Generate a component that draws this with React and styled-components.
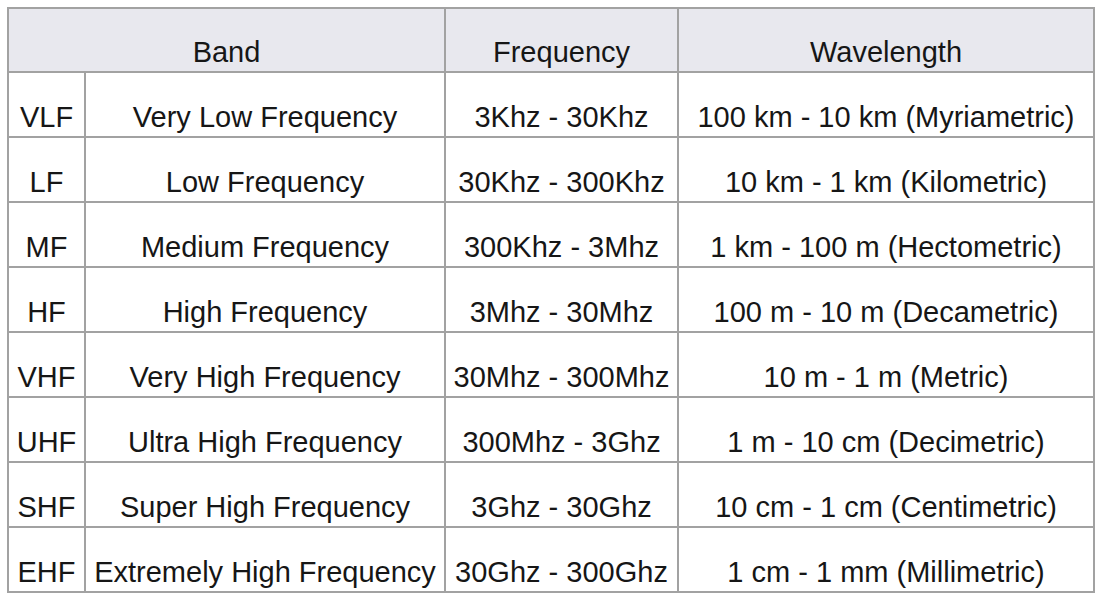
import React from 'react'
import styled, { createGlobalStyle } from 'styled-components'

const GlobalStyle = createGlobalStyle`
  html, body {
    margin: 0;
    padding: 0;
    background: #ffffff;
  }
`

const Page = styled.div`
  padding: 7px 0 0 7px;
`

const Table = styled.table`
  border-collapse: collapse;
  table-layout: fixed;
  width: 1086px;
  font-family: "Liberation Sans", Arial, sans-serif;
  font-size: 29px;
  color: #161616;
`

const Col = styled.col`
  width: ${({ $w }) => $w}px;
`

const Th = styled.th`
  height: 58px;
  padding: 0 0 4px;
  font-weight: normal;
  line-height: 29px;
  text-align: center;
  vertical-align: bottom;
  background-color: #e8e8ee;
  border: 2px solid #a2a2a2;
  white-space: nowrap;
`

const Td = styled.td`
  height: 59px;
  padding: 0 0 4px;
  line-height: 29px;
  text-align: center;
  vertical-align: bottom;
  border: 2px solid #a2a2a2;
  white-space: nowrap;
`

const widths = [77, 360, 233, 416]

const rows = [
  ['VLF', 'Very Low Frequency', '3Khz - 30Khz', '100 km - 10 km (Myriametric)'],
  ['LF', 'Low Frequency', '30Khz - 300Khz', '10 km - 1 km (Kilometric)'],
  ['MF', 'Medium Frequency', '300Khz - 3Mhz', '1 km - 100 m (Hectometric)'],
  ['HF', 'High Frequency', '3Mhz - 30Mhz', '100 m - 10 m (Decametric)'],
  ['VHF', 'Very High Frequency', '30Mhz - 300Mhz', '10 m - 1 m (Metric)'],
  ['UHF', 'Ultra High Frequency', '300Mhz - 3Ghz', '1 m - 10 cm (Decimetric)'],
  ['SHF', 'Super High Frequency', '3Ghz - 30Ghz', '10 cm - 1 cm (Centimetric)'],
  ['EHF', 'Extremely High Frequency', '30Ghz - 300Ghz', '1 cm - 1 mm (Millimetric)'],
]

export default function App() {
  return (
    <Page>
      <GlobalStyle />
      <Table>
        <colgroup>
          {widths.map((w, i) => (
            <Col key={i} $w={w} />
          ))}
        </colgroup>
        <thead>
          <tr>
            <Th colSpan={2}>Band</Th>
            <Th>Frequency</Th>
            <Th>Wavelength</Th>
          </tr>
        </thead>
        <tbody>
          {rows.map((r) => (
            <tr key={r[0]}>
              {r.map((c, i) => (
                <Td key={i}>{c}</Td>
              ))}
            </tr>
          ))}
        </tbody>
      </Table>
    </Page>
  )
}
